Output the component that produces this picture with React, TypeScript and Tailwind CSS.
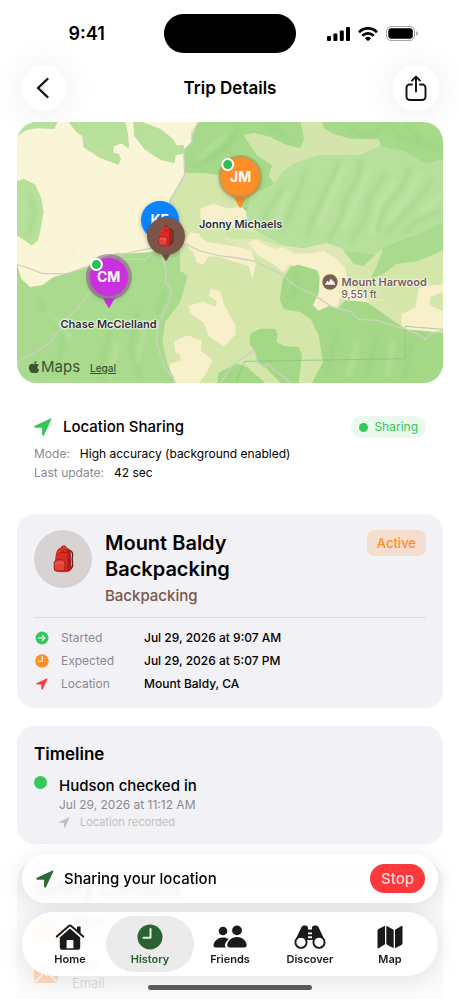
import type { ReactNode } from 'react';
import { FaApple } from 'react-icons/fa';

type IconProps = { className?: string };

function LocationArrow({ className }: IconProps) {
  return (
    <svg viewBox="0 0 18 18" className={className} fill="currentColor" stroke="currentColor" strokeWidth="1.2" strokeLinejoin="round" aria-hidden="true">
      <path d="M16.8 1.1 1.2 8.2c-.5.3-.4.9.2.9h7.3v7.4c0 .6.7.7.9.2Z" />
    </svg>
  );
}

function ClockIcon({ className, hand = 2 }: IconProps & { hand?: number }) {
  return (
    <svg viewBox="0 0 26 26" className={className} aria-hidden="true">
      <circle cx="13" cy="13" r="12.5" fill="currentColor" />
      <path d="M13.5 5v8.8H6.5" fill="none" stroke="#e9f1ea" strokeWidth={hand} strokeLinecap="round" strokeLinejoin="round" />
    </svg>
  );
}

function ArrowCircleIcon({ className }: IconProps) {
  return (
    <svg viewBox="0 0 14 14" className={className} aria-hidden="true">
      <circle cx="7" cy="7" r="6.5" fill="currentColor" />
      <path d="M3.8 7h6M7.4 4.6 9.9 7 7.4 9.4" fill="none" stroke="#fff" strokeWidth="1.2" strokeLinecap="round" strokeLinejoin="round" />
    </svg>
  );
}

function HomeIcon({ className }: IconProps) {
  return (
    <svg viewBox="0 0 30 28" className={className} aria-hidden="true">
      <path d="M1.800 13.600 13.800 3a1.800 1.800 0 0 1 2.400 0l12 10.600" fill="none" stroke="currentColor" strokeWidth="2" strokeLinecap="round" />
      <path d="M22 3.400h3.600v7L22 7.200Z" fill="currentColor" />
      <path fillRule="evenodd" d="M15 5.600 4.800 14.600v9.600c0 1.600 1 2.600 2.600 2.600h15.200c1.600 0 2.600-1 2.600-2.600v-9.600ZM12.400 17h5.200c.5 0 .8.3.8.8v7.400h-6.800v-7.400c0-.5.3-.8.8-.8Z" fill="currentColor" />
    </svg>
  );
}

function FriendsIcon({ className }: IconProps) {
  return (
    <svg viewBox="0 0 34 24" className={className} fill="currentColor" aria-hidden="true">
      <circle cx="10" cy="6" r="4.3" />
      <circle cx="24" cy="5.4" r="4.9" />
      <path d="M14.100 22.400H2.600c-1.400 0-2.100-.7-2.100-1.800 0-3.300 3.700-8 9.500-8 2.200 0 4.100.7 5.600 1.700-2.600 2-4 5-3.700 7 .1.500.6.9 2.200 1.100Z" />
      <path d="M24 12c5.800 0 9.700 4.500 9.700 8.200 0 1.400-.8 2.200-2.400 2.200H16.700c-1.600 0-2.400-.8-2.400-2.200 0-3.700 3.900-8.200 9.700-8.200Z" />
    </svg>
  );
}

function DiscoverIcon({ className }: IconProps) {
  return (
    <svg viewBox="0 0 32 24" className={className} aria-hidden="true">
      <path d="M7.400 2.200C8 1 9 .5 10.300.5h1.400c1.300 0 2.300 1 2.300 2.300v1.700h4V2.800C18 1.500 19 .5 20.300.5h1.400c1.300 0 2.300.5 2.900 1.700l5.900 12.500-7 1.500L18.400 15h-4.800l-5.100 1.200-7-1.500Z" fill="currentColor" />
      <path d="M14 7.500h4v1.800h-4zM14 11.300h4v1.900h-4z" fill="#fff" />
      <circle cx="7" cy="17.300" r="5.600" fill="#fff" stroke="currentColor" strokeWidth="1.900" />
      <circle cx="25" cy="17.300" r="5.600" fill="#fff" stroke="currentColor" strokeWidth="1.900" />
    </svg>
  );
}

function MapIcon({ className }: IconProps) {
  return (
    <svg viewBox="0 0 26 24" className={className} fill="currentColor" aria-hidden="true">
      <path d="M8 .8v18.500L1.600 23.200c-.6.4-1.100.1-1.100-.6V6c0-.9.3-1.400 1-1.900Z" />
      <path d="M9.300.8 16.700 4.700v18.500L9.300 19.300Z" />
      <path d="M18 4.700 24.400.9c.6-.4 1.100-.1 1.100.6V18c0 .9-.3 1.400-1 1.900L18 23.200Z" />
    </svg>
  );
}

function Backpack({ className }: IconProps) {
  return (
    <svg viewBox="0 0 24 30" className={className} aria-hidden="true">
      <path d="M17 5c4 1 5.500 4 4.500 8s1.500 8-.5 11c-1 2-2.500 3-4 3.500" fill="none" stroke="#5b2a1f" strokeWidth="1.600" />
      <path d="M10 3.500C10 .6 14.500.4 14.800 3" fill="none" stroke="#a81a17" strokeWidth="1.400" />
      <path d="M4 9c.5-4 3-6.200 7-6.600C16 2 19 4 19.600 9l.6 15c0 3-2 4.500-5 4.900-4 .6-8 .2-11-.6-2-.5-2.800-2-2.600-4Z" fill="#d92b25" />
      <path d="M15.500 3.500C18 4 19.300 6 19.600 9l.6 15c0 3-2 4.500-5 4.900 1.500-6 1.800-18 .3-25.400Z" fill="#a91d1c" />
      <path d="M4.800 10c3-2.600 7-3 10.500-1.600" fill="none" stroke="#8f1614" strokeWidth=".9" />
      <path d="M2.300 17.500c1-2 9-2.500 10.600-.4.900 2 .9 7.500.2 10-3 1.200-8 .9-10.500-.3-.8-2.400-.9-7-.3-9.300Z" fill="#e4433a" stroke="#8f1614" strokeWidth=".8" />
      <path d="M3 20c3-1.400 7-1.400 9.600 0M8 6.500l-2 3" fill="none" stroke="#f37b70" strokeWidth=".8" />
    </svg>
  );
}

function StatusBar() {
  return (
    <div className="grid grid-cols-3 items-center pt-3.5">
      <p className="pl-10 pr-5 text-center text-lg font-semibold leading-6">9:41</p>
      <div className="mx-auto h-[39px] w-[132px] rounded-full bg-black" />
      <svg viewBox="0 0 92 18" className="ml-5 h-[18px] w-[92px]" aria-hidden="true">
        <rect x="0" y="11" width="4" height="5" rx="1" />
        <rect x="6.400" y="8.500" width="4" height="7.500" rx="1" />
        <rect x="12.800" y="5.500" width="4" height="10.500" rx="1" />
        <rect x="19" y="2" width="4" height="14" rx="1" />
        <g fill="none" stroke="#000" strokeWidth="2.700">
          <path d="M32 7.200a12.700 12.700 0 0 1 18 0" />
          <path d="M35.300 10.700a8 8 0 0 1 11.400 0" />
        </g>
        <path d="M41 16.200l-3-3a4.300 4.300 0 0 1 6 0Z" />
        <rect x="59.500" y="1.500" width="28" height="14" rx="4.500" fill="none" stroke="#a5a5a5" />
        <rect x="61.300" y="3.300" width="24.500" height="10.400" rx="3" />
        <path d="M89.200 6.300c1.300.4 1.800 1.200 1.800 2.200s-.5 1.800-1.800 2.200Z" fill="#a5a5a5" />
      </svg>
    </div>
  );
}

function Header() {
  return (
    <header className="flex items-center justify-between px-[21px] pt-3 pb-[11px]">
      <button type="button" aria-label="Back" className="grid size-[46px] place-items-center rounded-full bg-white shadow-[0_2px_36px_rgba(0,0,0,0.09)]">
        <svg viewBox="0 0 16 22" className="h-[22px] w-4" fill="none" stroke="#111" strokeWidth="2.400" strokeLinecap="round" strokeLinejoin="round">
          <path d="M11.500 2 2 11l9.500 9" />
        </svg>
      </button>
      <h1 className="text-[17px] font-semibold leading-6">Trip Details</h1>
      <button type="button" aria-label="Share" className="grid size-[46px] place-items-center rounded-full bg-white shadow-[0_2px_36px_rgba(0,0,0,0.09)]">
        <svg viewBox="0 0 22 27" className="h-[27px] w-[22px]" fill="none" stroke="#111" strokeWidth="1.900" strokeLinecap="round" strokeLinejoin="round">
          <path d="M7 9.500H4.800A3.300 3.300 0 0 0 1.500 12.800v8.900A3.300 3.300 0 0 0 4.800 25h12.400a3.300 3.300 0 0 0 3.300-3.300v-8.900a3.300 3.300 0 0 0-3.300-3.300H15M11 16.500V1.800M7 5.600l4-4 4 4" />
        </svg>
      </button>
    </header>
  );
}

function Terrain() {
  return (
    <svg viewBox="0 0 1278 783" preserveAspectRatio="xMidYMid slice" className="absolute inset-0 size-full" aria-hidden="true">
      <defs>
        <filter id="soft" x="-10%" y="-10%" width="120%" height="120%">
          <feGaussianBlur stdDeviation="2" />
        </filter>
      </defs>
      <path d="M0 0H1278V783H0Z" fill="#fbf5d8" />
      <g fill="#b7e09a" stroke="#b7e09a" strokeWidth="6" strokeLinejoin="round">
        <path d="M0 40 25 22 60 15 110 18 118 0H0Z" />
        <path d="M158 0 180 28 198 40 203 75 250 105 303 125 309 112 303 99 285 92 288 70 315 61 333 75 330 35 322 0Z" />
        <path d="M352 0 354 40 385 80 430 110 470 120 474 97 496 93 498 72 478 74 465 52 430 24 395 10 368 0Z" />
        <path d="M0 180 20 174 53 190 70 230 77 270 66 330 60 353 45 367 25 353 0 338Z" />
      </g>

      {/* meadow through the middle */}
      <path d="M503 150 480 195 455 235 490 340 490 440 510 465 490 540 445 600 437 660 450 720 472 783H1278V150Z" fill="#d4e6a9" />
      <path d="M690 320 740 335 850 378 930 362 980 378 1060 400 1060 470 1152 560 1152 610 1000 545 910 520 800 440 690 395 620 350Z" fill="#dee8b5" />
      <path d="M620 320 760 335 800 375 720 350 640 350Z" fill="#cbe5a5" />
      <g fill="#f8efcb" stroke="#f8efcb" strokeWidth="5" strokeLinejoin="round">
        <path d="M553 262 590 247 630 262 682 257 686 290 676 312 570 308 552 285Z" />
        <path d="M503 362 520 334 546 337 552 350 568 362 610 368 700 386 714 425 706 465 698 430 650 416 600 400 572 402 558 426 542 420 530 388Z" />
        <path d="M697 362 715 354 745 372 775 384 800 378 830 397 880 397 920 390 955 412 985 445 985 500 965 530 958 558 940 547 905 563 888 548 910 512 908 458 880 440 815 424 800 448 770 425 722 395Z" />
        <path d="M975 490 1040 515 1095 535 1050 538 1028 542 985 530Z" />
        <path d="M517 552 560 542 597 557 602 535 577 520 583 503 608 510 618 547 653 610 653 636 620 671 577 640 562 600 522 573Z" />
        <path d="M473 660 510 642 552 657 549 687 584 715 568 750 543 783H482L458 742 462 727 496 717 491 697 477 688Z" />
        <path d="M1154 577 1195 557 1205 502 1225 492 1278 487V630H1185L1154 608Z" />
      </g>
      <path d="M1278 510 1240 525 1238 550 1278 568Z" fill="#d4e6a9" />

      {/* northern slopes */}
      <path d="M545 0 525 40 522 62 500 85 503 152 560 153 612 160 650 230 690 270 695 312 730 332 800 370 860 378 930 362 975 378 1010 425 1040 432 1098 378 1080 430 1060 470 1100 455 1140 425 1200 418 1278 385V0Z" fill="#a6d98a" />
      <path d="M830 125 900 100 1030 98 1092 72 1170 90 1225 125 1278 110V330L1180 345 1098 378 1040 432 1010 425 975 378 930 362 860 378 800 370 730 332 695 312 690 270 700 220 770 185 795 150Z" fill="#b6e09b" />
      <path d="M1278 300 1190 345 1098 378 1080 430 1060 470 1100 455 1140 425 1200 418 1278 385Z" fill="#a9da8d" />
      <path d="M680 40 710 32 760 45 810 70 850 78 862 50 850 0H915L920 18 950 35 1000 50 1085 52 1092 72 1030 98 900 100 830 125 795 150 770 185 755 160 765 130 720 100 700 70Z" fill="#d3e5ab" />
      <path d="M1098 385 1080 430 1060 470 1100 455 1140 425 1200 418 1278 392V487L1225 492 1205 502 1195 557 1154 577V612L1050 535 1000 480 985 430Z" fill="#d4e6a9" opacity=".75" />
      <path d="M985 388 1010 425 1040 432 1075 398Z" fill="#a9da8d" />

      {/* lower forest */}
      <path d="M0 425 12 470 40 495 75 490 110 465 200 440 260 405 300 393 330 395 400 390 490 370V445L512 462 490 540 445 600 437 660 450 720 475 783H0Z" fill="#a9da8d" />
      <path d="M820 435 845 428 900 445 908 465 905 510 888 550 905 567 940 550 962 562 985 535 1050 540 1100 575 1165 622 1278 632V783H885L918 720 905 640 880 590 850 570 800 562 788 530 798 470Z" fill="#a4d887" />
      <path d="M700 635 730 620 775 620 782 640 778 660 800 672 845 675 855 700 845 783H790L750 740 720 720 715 690 698 665Z" fill="#a4d887" />
      <path d="M600 783 605 752 660 725 690 735 745 783Z" fill="#a4d887" />

      {/* relief */}
      <g transform="scale(3)" fill="none" filter="url(#soft)" strokeLinecap="round" strokeWidth="3">
        <g stroke="#84c66d" opacity=".36">
          <path d="M190 38 214 18 222 4M178 44l26-12 14-18M205 48l14-12M334 6l12 8 14-3 8-9M374 4l8 12 20 4M390 4l18 18 14 4M254 4l16 12" />
          <path d="M322 42 314 58 305 77 296 96 290 114M344 38l-3 18-13 21-4 20-12 20M368 52l-16 24-4 20-14 23M392 46l-7 20-18 19-7 24M414 60l-10 14-18 19-16 18M421 90l-22 10-13 12M266 66l-14 20-8 16M288 50l-8 26-16 34" />
          <path d="M22 180 46 212 40 252M92 212l-10 40M120 190l-6 36 10 30M320 210l-10 40M360 214l-10 38M395 222l-8 34M282 152l-8 26M12 72l6 18-6 22M148 170l-8 20" />
        </g>
        <g stroke="#dcf2c4" opacity=".36">
          <path d="M183 36 208 14M328 44l-14 30-12 30M352 48l-10 26-16 32M378 60l-16 22-8 30M402 52l-10 22-20 24M270 70l-10 30M424 74l-20 16" />
          <path d="M30 190l24 26M100 220l-6 36M340 220l-8 34M376 220l-6 34M128 206l-8 34" />
        </g>
        <path d="M62 14l14 12 22 8M130 12l14 16M40 40l20 40-4 60M90 60l20 40M30 20l20 20" stroke="#eae2b8" opacity=".25" />
      </g>

      <path d="M655 783 683 718 1165 710V613L1278 622" fill="none" stroke="#86c188" strokeWidth="3" opacity=".7" />
      <g fill="none" stroke="#cdd1c3" strokeWidth="4" strokeLinejoin="round">
        <path d="M545 0 525 30V60L500 85 503 160 480 200 460 235 455 260" />
        <path d="M0 428 40 440 75 455 150 455 210 435 300 400 385 382 420 375M300 412H385L405 395" />
        <path d="M505 365 545 385 600 400 660 408 715 418 790 455 840 495 885 515 945 555 1000 568 1025 592 1080 595 1120 608 1160 620 1195 632 1225 652 1240 635 1278 625" />
        <path d="M435 410 448 450 445 480 463 505 455 540 425 600 418 660 430 700 445 740 470 765 472 783" />
        <path d="M220 510 185 555 155 585 130 620 100 660 50 695 10 715 0 730M610 783 650 725 712 685 722 720 740 735 750 725 820 783" />
      </g>
    </svg>
  );
}

type PinProps = {
  place: string;
  circle: string;
  tail: string;
  name?: string;
  online?: boolean;
  children: ReactNode;
};

function Pin({ place, circle, tail, name, online, children }: PinProps) {
  return (
    <div className={`absolute flex -translate-x-1/2 flex-col items-center ${place}`}>
      <div className={`relative grid size-[38px] place-items-center rounded-full text-sm font-bold text-white ${circle}`}>
        {children}
        {online && <span className="absolute left-0 top-0 size-[13px] rounded-full border-2 border-white bg-[#2dbd56]" />}
      </div>
      <svg viewBox="0 0 12 10" className={`h-2.5 w-3 ${tail}`} fill="currentColor" aria-hidden="true">
        <path d="M0 0h12L6.800 9.200q-.8 1-1.600 0Z" />
      </svg>
      {name && (
        <p className="mt-2 whitespace-nowrap text-[11px] font-semibold leading-4 text-[#2c2c2e] [text-shadow:0_0_2px_#fff,0_0_2px_#fff,0_0_3px_#fff,0_0_3px_#fff]">{name}</p>
      )}
    </div>
  );
}

function TripMap() {
  return (
    <section aria-label="Trip map" className="relative h-[261px] overflow-hidden rounded-[20px]">
      <Terrain />
      <div className="absolute left-[71.5%] top-[152px] flex items-start gap-1 text-[#7a6052] [text-shadow:0_0_2px_#fff,0_0_2px_#fff,0_0_3px_#fff]">
        <svg viewBox="0 0 16 16" className="size-4" aria-hidden="true">
          <circle cx="8" cy="8" r="7.700" fill="#7a6052" />
          <path d="m2.800 10.800 2.700-4 1.300 1.400L9 4.500l1.500 2.700.8-.8 2 4.400Z" fill="#fff" />
        </svg>
        <div>
          <p className="text-[11px] font-semibold leading-4">Mount Harwood</p>
          <p className="text-[10px] font-medium leading-[9px]">9,551 ft</p>
        </div>
      </div>
      <Pin place="left-[33.5%] top-[79px]" circle="bg-[#0a84ff] shadow-[0_1px_4px_rgba(0,0,0,0.3)]" tail="text-[#0a84ff]">KF</Pin>
      <Pin place="left-[35%] top-[95px]" circle="bg-[#79554a] shadow-[0_1px_4px_rgba(0,0,0,0.3)]" tail="-mt-1 text-[#79554a]">
        <Backpack className="h-[22px] w-[18px]" />
      </Pin>
      <Pin place="left-[52.5%] top-[36px]" circle="bg-[#ff8d28] shadow-[0_0_0_3px_rgba(205,135,55,0.6),0_2px_6px_rgba(0,0,0,0.3)]" tail="mt-0.5 text-[#ff8d28]" name="Jonny Michaels" online>JM</Pin>
      <Pin place="left-[21.5%] top-[136px]" circle="bg-[#cb30e0] shadow-[0_0_0_4px_rgba(150,80,150,0.55),0_2px_6px_rgba(0,0,0,0.3)]" tail="mt-0.5 text-[#cb30e0]" name="Chase McClelland" online>CM</Pin>
      <div className="absolute bottom-1.5 left-2.5 flex items-center text-[#3c5334]">
        <FaApple className="size-3.5" aria-hidden="true" />
        <span className="text-[15px] leading-5">Maps</span>
        <a href="#legal" className="ml-2.5 pt-0.5 text-[10px] font-medium leading-4 underline">Legal</a>
      </div>
    </section>
  );
}

function LocationSharing() {
  return (
    <section className="px-[17px] pt-8 pb-8">
      <div className="flex items-center">
        <LocationArrow className="size-[18px] text-[#34c759]" />
        <h2 className="ml-[11px] text-[15px] font-medium leading-6">Location Sharing</h2>
        <span className="ml-auto flex h-[22px] items-center gap-1.5 rounded-full bg-[#eaf8ee] px-2 text-xs text-[#34c759]">
          <span className="size-[9px] rounded-full bg-[#34c759]" />
          Sharing
        </span>
      </div>
      <dl className="mt-[5px] text-xs leading-[19px]">
        <div className="flex gap-2.5">
          <dt className="text-[#8a8a8e]">Mode:</dt>
          <dd>High accuracy (background enabled)</dd>
        </div>
        <div className="flex gap-2.5">
          <dt className="text-[#8a8a8e]">Last update:</dt>
          <dd>42 sec</dd>
        </div>
      </dl>
    </section>
  );
}

function TripCard() {
  const rows = [
    { icon: <ArrowCircleIcon className="size-3.5 text-[#34c759]" />, label: 'Started', value: 'Jul 29, 2026 at 9:07 AM' },
    { icon: <ClockIcon className="size-3.5 text-[#ff8d28]" hand={2.4} />, label: 'Expected', value: 'Jul 29, 2026 at 5:07 PM' },
    { icon: <LocationArrow className="size-3 text-[#ff383c]" />, label: 'Location', value: 'Mount Baldy, CA' },
  ];

  return (
    <section className="rounded-[18px] bg-[#f2f1f6] px-[17px] pt-4 pb-[13px]">
      <div className="flex items-start border-b border-[#dcdbe0] pb-[9px]">
        <div className="grid size-[58px] place-items-center rounded-full bg-[#d9d2d3]">
          <Backpack className="h-7 w-[23px]" />
        </div>
        <div className="ml-[13px] w-36">
          <h2 className="text-xl font-semibold leading-[26px]">Mount Baldy Backpacking</h2>
          <p className="mt-0.5 text-[15px] font-medium leading-6 text-[#79554a]">Backpacking</p>
        </div>
        <span className="ml-auto rounded-lg bg-[#f6dece] px-2.5 py-1 text-[13px] font-medium leading-[18px] text-[#ff8d28]">Active</span>
      </div>
      <dl className="mt-2 text-xs leading-[23px]">
        {rows.map((row) => (
          <div key={row.label} className="flex items-center">
            <dt className="flex w-[110px] items-center text-[#8a8a8e]">
              <span className="mr-[11px] grid w-4 place-items-center">{row.icon}</span>
              {row.label}
            </dt>
            <dd className="font-medium">{row.value}</dd>
          </div>
        ))}
      </dl>
    </section>
  );
}

function Timeline() {
  return (
    <section className="mt-[18px] rounded-[18px] bg-[#f2f1f6] px-[17px] pt-4 pb-3.5">
      <h2 className="text-[17px] font-semibold leading-6">Timeline</h2>
      <div className="mt-2.5 flex gap-3">
        <span className="size-[13px] rounded-full bg-[#34c759]" />
        <div>
          <p className="text-[15px] font-medium leading-5">Hudson checked in</p>
          <p className="text-xs leading-[18px] text-[#8a8a8e]">Jul 29, 2026 at 11:12 AM</p>
          <p className="flex items-center gap-2.5 text-[11px] leading-4 text-[#bfbfc3]">
            <LocationArrow className="size-[11px]" />
            Location recorded
          </p>
        </div>
      </div>
    </section>
  );
}

function SafetyContacts() {
  return (
    <section className="mt-[18px] rounded-[18px] bg-[#f2f1f6] px-[17px] pt-4 pb-6">
      <h2 className="text-[19px] font-semibold leading-6">Safety Contacts</h2>
      <ul className="mt-[11px] space-y-[7px]">
        {['Mom', 'Dad'].map((contact) => (
          <li key={contact} className="flex items-center gap-3.5">
            <svg viewBox="0 0 24 18" className="h-[18px] w-6" aria-hidden="true">
              <rect width="24" height="18" rx="3" fill="#ff8d28" />
              <path d="m1 1 11 9L23 1M1 17l8-8M23 17l-8-8" fill="none" stroke="#fff" strokeWidth="1.200" />
            </svg>
            <div className="leading-[18px]">
              <p className="text-sm font-medium leading-[18px]">{contact}</p>
              <p className="text-[13px] leading-[18px] text-[#8a8a8e]">Email</p>
            </div>
          </li>
        ))}
      </ul>
    </section>
  );
}

function BottomBars() {
  const tabs = [
    { label: 'Home', icon: <HomeIcon className="h-7 w-[30px]" /> },
    { label: 'History', icon: <ClockIcon className="size-[26px]" />, active: true },
    { label: 'Friends', icon: <FriendsIcon className="h-6 w-[34px]" /> },
    { label: 'Discover', icon: <DiscoverIcon className="h-6 w-8" /> },
    { label: 'Map', icon: <MapIcon className="h-6 w-[26px]" /> },
  ];

  return (
    <div className="fixed inset-x-0 bottom-0 bg-gradient-to-b from-white/0 via-white/50 via-35% to-white/75 px-[22px] pt-2.5 pb-[9px]">
      <div className="flex items-center rounded-full bg-white/90 py-2.5 pl-3.5 pr-[13px] shadow-[0_4px_24px_rgba(0,0,0,0.1)] backdrop-blur-[2px]">
        <LocationArrow className="size-[18px] text-[#2f6b36]" />
        <p className="ml-2.5 text-[15px] font-medium leading-6">Sharing your location</p>
        <button type="button" className="ml-auto h-[29px] rounded-full bg-[#ff383c] px-[11px] text-[15px] font-medium leading-6 text-[#ffd9da]">Stop</button>
      </div>
      <nav className="mt-[9px] grid grid-cols-5 rounded-full bg-white/90 px-2 py-1 shadow-[0_4px_24px_rgba(0,0,0,0.1)] backdrop-blur-[2px]">
        {tabs.map((tab) => (
          <button
            key={tab.label}
            type="button"
            className={`flex h-14 flex-col items-center rounded-full pt-1.5 text-[11px] font-semibold leading-4 ${tab.active ? '-mx-1 bg-[#ebebeb] text-[#2a6231]' : 'text-[#1a1a1a]'}`}
          >
            <span className="grid h-[29px] place-items-center">{tab.icon}</span>
            {tab.label}
          </button>
        ))}
      </nav>
      <div className="mx-auto mt-[9px] h-[5px] w-[164px] rounded-full bg-[#5c5c5c]" />
    </div>
  );
}

export default function App() {
  return (
    <div className="h-screen overflow-y-auto bg-white font-[Inter,sans-serif] text-black [scrollbar-width:none]">
      <StatusBar />
      <Header />
      <main className="px-[17px]">
        <TripMap />
        <LocationSharing />
        <TripCard />
        <Timeline />
        <SafetyContacts />
      </main>
      <BottomBars />
    </div>
  );
}
